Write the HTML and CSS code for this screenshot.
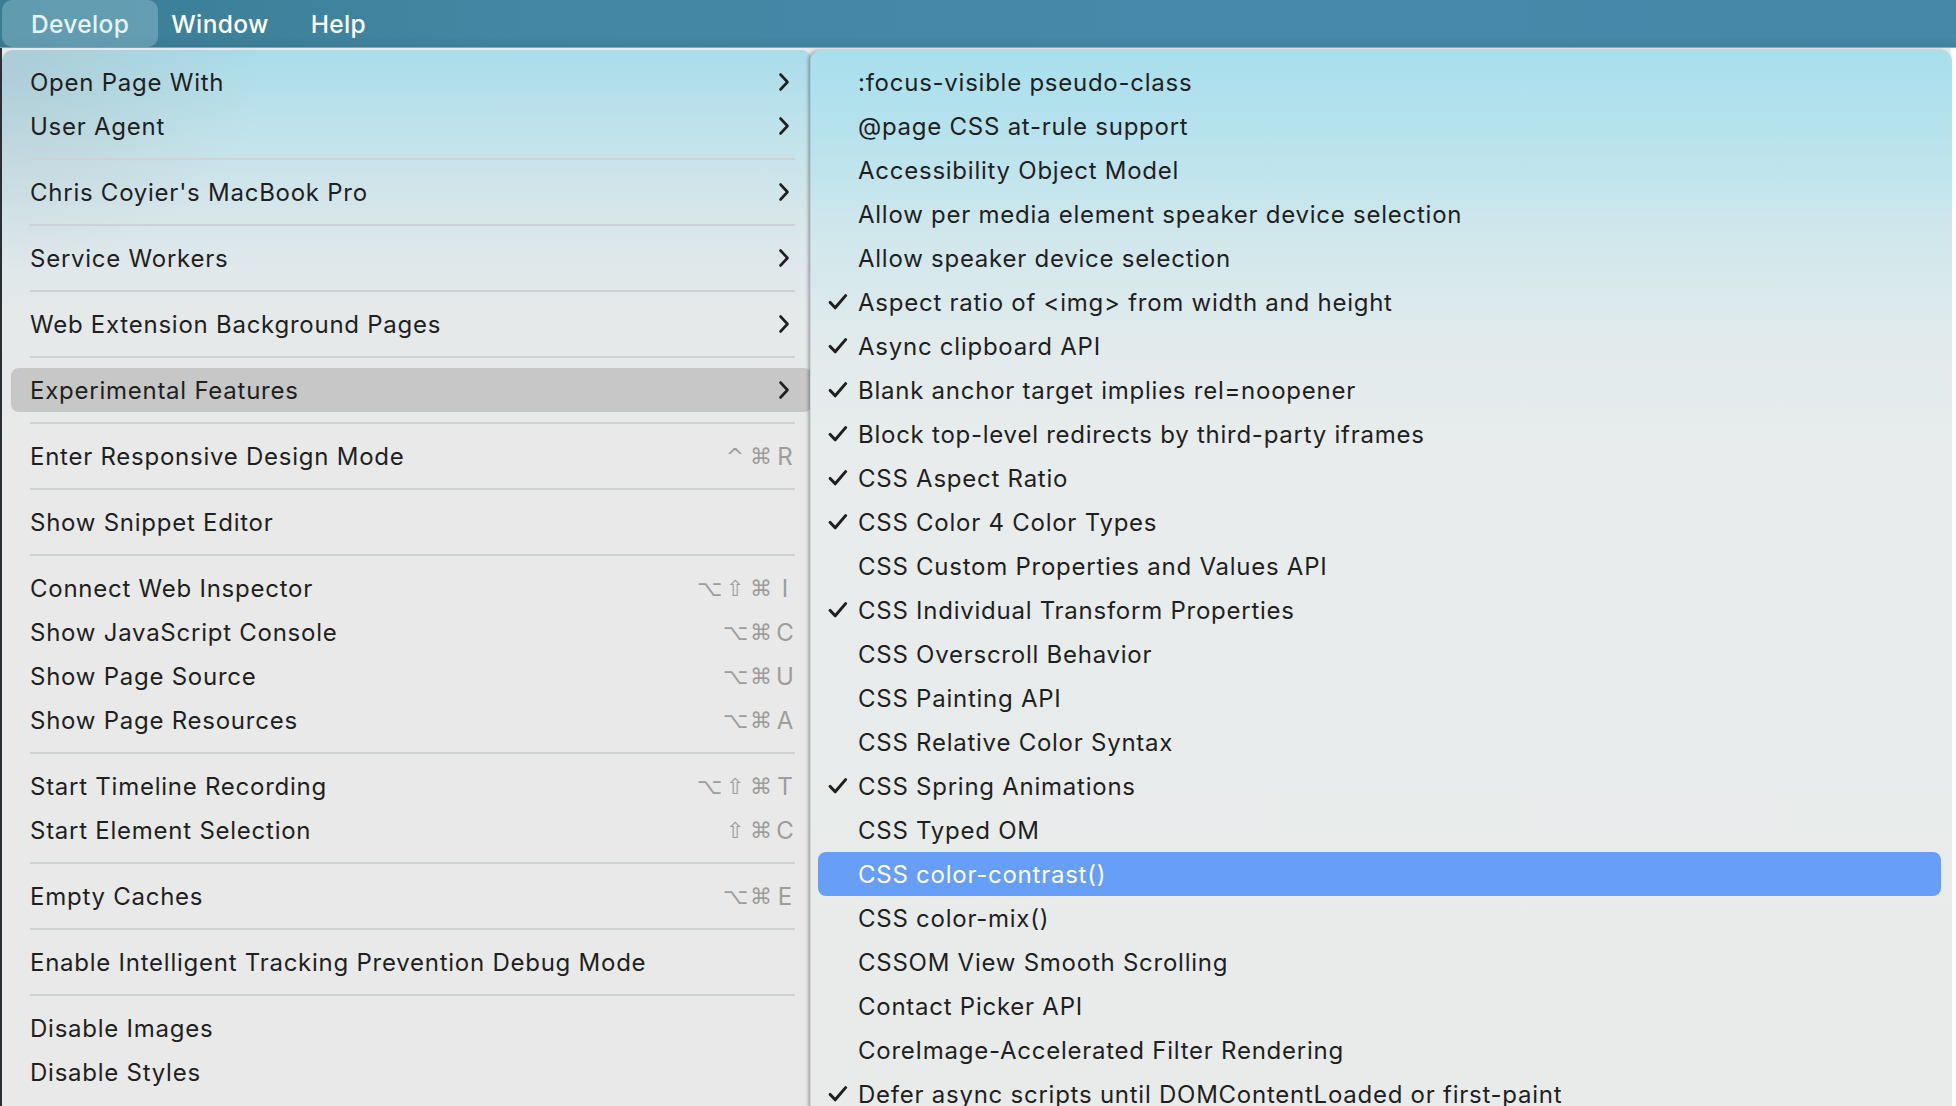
FILE: index.html
```html
<!DOCTYPE html>
<html lang="en">
<head>
<meta charset="utf-8">
<title>Develop menu</title>
<link rel="stylesheet" href="styles.css">
</head>
<body>
<div class="screen">
  <div class="menubar">
    <div class="mb-item active">Develop</div>
    <div class="mb-item">Window</div>
    <div class="mb-item">Help</div>
  </div>
  <div class="menus">
    <div class="menu parent">
      <div class="row"><span class="label">Open Page With</span><svg class="chev" viewBox="0 0 12 20"><polyline points="2.5,2.5 9.5,10 2.5,17.5"/></svg></div>
      <div class="row"><span class="label">User Agent</span><svg class="chev" viewBox="0 0 12 20"><polyline points="2.5,2.5 9.5,10 2.5,17.5"/></svg></div>
      <div class="sep"></div>
      <div class="row"><span class="label">Chris Coyier's MacBook Pro</span><svg class="chev" viewBox="0 0 12 20"><polyline points="2.5,2.5 9.5,10 2.5,17.5"/></svg></div>
      <div class="sep"></div>
      <div class="row"><span class="label">Service Workers</span><svg class="chev" viewBox="0 0 12 20"><polyline points="2.5,2.5 9.5,10 2.5,17.5"/></svg></div>
      <div class="sep"></div>
      <div class="row"><span class="label">Web Extension Background Pages</span><svg class="chev" viewBox="0 0 12 20"><polyline points="2.5,2.5 9.5,10 2.5,17.5"/></svg></div>
      <div class="sep"></div>
      <div class="row open"><span class="label">Experimental Features</span><svg class="chev" viewBox="0 0 12 20"><polyline points="2.5,2.5 9.5,10 2.5,17.5"/></svg></div>
      <div class="sep"></div>
      <div class="row"><span class="label">Enter Responsive Design Mode</span><span class="keys"><span class="k">^</span><span class="k">⌘</span><span class="key">R</span></span></div>
      <div class="sep"></div>
      <div class="row"><span class="label">Show Snippet Editor</span></div>
      <div class="sep"></div>
      <div class="row"><span class="label">Connect Web Inspector</span><span class="keys"><span class="k">⌥</span><span class="k">⇧</span><span class="k">⌘</span><span class="key">I</span></span></div>
      <div class="row"><span class="label">Show JavaScript Console</span><span class="keys"><span class="k">⌥</span><span class="k">⌘</span><span class="key">C</span></span></div>
      <div class="row"><span class="label">Show Page Source</span><span class="keys"><span class="k">⌥</span><span class="k">⌘</span><span class="key">U</span></span></div>
      <div class="row"><span class="label">Show Page Resources</span><span class="keys"><span class="k">⌥</span><span class="k">⌘</span><span class="key">A</span></span></div>
      <div class="sep"></div>
      <div class="row"><span class="label">Start Timeline Recording</span><span class="keys"><span class="k">⌥</span><span class="k">⇧</span><span class="k">⌘</span><span class="key">T</span></span></div>
      <div class="row"><span class="label">Start Element Selection</span><span class="keys"><span class="k">⇧</span><span class="k">⌘</span><span class="key">C</span></span></div>
      <div class="sep"></div>
      <div class="row"><span class="label">Empty Caches</span><span class="keys"><span class="k">⌥</span><span class="k">⌘</span><span class="key">E</span></span></div>
      <div class="sep"></div>
      <div class="row"><span class="label">Enable Intelligent Tracking Prevention Debug Mode</span></div>
      <div class="sep"></div>
      <div class="row"><span class="label">Disable Images</span></div>
      <div class="row"><span class="label">Disable Styles</span></div>
    </div>
    <div class="menu sub">
      <div class="item"><span class="check"></span><span class="label">:focus-visible pseudo-class</span></div>
      <div class="item"><span class="check"></span><span class="label">@page CSS at-rule support</span></div>
      <div class="item"><span class="check"></span><span class="label">Accessibility Object Model</span></div>
      <div class="item"><span class="check"></span><span class="label">Allow per media element speaker device selection</span></div>
      <div class="item"><span class="check"></span><span class="label">Allow speaker device selection</span></div>
      <div class="item"><svg class="check" viewBox="0 0 20 16"><path d="M2.2 8.4 L7.2 13.8 L17.6 1.6"/></svg><span class="label">Aspect ratio of &lt;img&gt; from width and height</span></div>
      <div class="item"><svg class="check" viewBox="0 0 20 16"><path d="M2.2 8.4 L7.2 13.8 L17.6 1.6"/></svg><span class="label">Async clipboard API</span></div>
      <div class="item"><svg class="check" viewBox="0 0 20 16"><path d="M2.2 8.4 L7.2 13.8 L17.6 1.6"/></svg><span class="label">Blank anchor target implies rel=noopener</span></div>
      <div class="item"><svg class="check" viewBox="0 0 20 16"><path d="M2.2 8.4 L7.2 13.8 L17.6 1.6"/></svg><span class="label">Block top-level redirects by third-party iframes</span></div>
      <div class="item"><svg class="check" viewBox="0 0 20 16"><path d="M2.2 8.4 L7.2 13.8 L17.6 1.6"/></svg><span class="label">CSS Aspect Ratio</span></div>
      <div class="item"><svg class="check" viewBox="0 0 20 16"><path d="M2.2 8.4 L7.2 13.8 L17.6 1.6"/></svg><span class="label">CSS Color 4 Color Types</span></div>
      <div class="item"><span class="check"></span><span class="label">CSS Custom Properties and Values API</span></div>
      <div class="item"><svg class="check" viewBox="0 0 20 16"><path d="M2.2 8.4 L7.2 13.8 L17.6 1.6"/></svg><span class="label">CSS Individual Transform Properties</span></div>
      <div class="item"><span class="check"></span><span class="label">CSS Overscroll Behavior</span></div>
      <div class="item"><span class="check"></span><span class="label">CSS Painting API</span></div>
      <div class="item"><span class="check"></span><span class="label">CSS Relative Color Syntax</span></div>
      <div class="item"><svg class="check" viewBox="0 0 20 16"><path d="M2.2 8.4 L7.2 13.8 L17.6 1.6"/></svg><span class="label">CSS Spring Animations</span></div>
      <div class="item"><span class="check"></span><span class="label">CSS Typed OM</span></div>
      <div class="item selected"><span class="check"></span><span class="label">CSS color-contrast()</span></div>
      <div class="item"><span class="check"></span><span class="label">CSS color-mix()</span></div>
      <div class="item"><span class="check"></span><span class="label">CSSOM View Smooth Scrolling</span></div>
      <div class="item"><span class="check"></span><span class="label">Contact Picker API</span></div>
      <div class="item"><span class="check"></span><span class="label">CoreImage-Accelerated Filter Rendering</span></div>
      <div class="item"><svg class="check" viewBox="0 0 20 16"><path d="M2.2 8.4 L7.2 13.8 L17.6 1.6"/></svg><span class="label">Defer async scripts until DOMContentLoaded or first-paint</span></div>
    </div>
  </div>
</div>
</body>
</html>
```

FILE: styles.css
```css
* { box-sizing: border-box; }

html, body {
  margin: 0;
  padding: 0;
}

body {
  width: 1956px;
  height: 1106px;
  overflow: hidden;
  background: #f4f4f4;
  font-family: Inter, "Noto Sans", "Liberation Sans", sans-serif;
  color: #1f1f1f;
}

.screen {
  width: 1956px;
  height: 1106px;
  overflow: hidden;
  background: linear-gradient(90deg, #2a2f33 0, #2a2f33 2px, #e9e9e9 2px, #e9e9e9 1950px, #ffffff 1952px);
}

/* ---------- menu bar ---------- */
.menubar {
  height: 48px;
  display: flex;
  align-items: center;
  padding-left: 10px;
  background:
    linear-gradient(180deg, rgba(255,255,255,0) 0, rgba(255,255,255,0) 36px, rgba(0,0,0,0.06) 47px, rgba(150,200,220,0.6) 47px),
    linear-gradient(90deg, #3a7d94 0, #4386a3 500px, #4689aa 1200px, #4588a8 1956px);
  color: #ffffff;
  font-size: 24.5px;
  font-weight: 500;
  letter-spacing: 0.35px;
}

.mb-item {
  position: relative;
  padding: 0 21px;
  line-height: 48px;
}

.mb-item.active::before {
  content: "";
  position: absolute;
  top: 0;
  bottom: 1px;
  left: -8px;
  right: -8px;
  border-radius: 10px;
  background: rgba(180, 220, 235, 0.33);
}

/* ---------- menus ---------- */
.menus {
  display: flex;
  padding-top: 2px;
  padding-left: 2px;
  align-items: flex-start;
}

.menu {
  border-radius: 11px 11px 0 0;
  font-size: 24px;
  letter-spacing: 0.75px;
  padding-top: 10px;
  height: 1060px;
}

.parent {
  width: 810px;
  background:
    radial-gradient(ellipse 260px 200px at 0 20px, rgba(170,175,178,0.35), rgba(170,175,178,0) 100%),
    linear-gradient(180deg, #a9dcea 0, #bde2eb 70px, #d6e6ea 160px, #e5e9ea 260px, #e9e9e9 400px, #e9e9e9 100%);
}

.sub {
  width: 1142px;
  margin-left: -2px;
  position: relative;
  background: linear-gradient(180deg, #a9dfed 0, #b6e2ed 80px, #cfe7ec 180px, #e2ebec 300px, #e9ecec 420px, #e9ebeb 100%);
  box-shadow: -2px 0 3px rgba(0,0,0,0.28), inset 1px 0 0 rgba(0,0,0,0.08);
}

.row {
  height: 44px;
  display: flex;
  align-items: center;
  padding: 0 22px 0 28px;
  white-space: nowrap;
}

.row .label {
  flex: 1;
}

.row.open {
  margin-left: 9px;
  padding-left: 19px;
  padding-right: 22px;
  background: #c7c7c7;
  border-radius: 8px;
}

.chev {
  width: 12px;
  height: 20px;
  fill: none;
  stroke: #1f1f1f;
  stroke-width: 2.6;
  stroke-linecap: round;
  stroke-linejoin: round;
}

.sep {
  height: 22px;
  display: flex;
  align-items: center;
  padding: 0 17px 0 28px;
}

.sep::after {
  content: "";
  flex: 1;
  height: 2px;
  background: #cfd2d3;
}

.keys {
  display: flex;
  align-items: center;
  gap: 2px;
  color: #9d9d9d;
  font-family: "DejaVu Sans", Inter, sans-serif;
  font-size: 22px;
  letter-spacing: 0;
  margin-right: -5px;
}

.keys .k {
  width: 24px;
  text-align: center;
  overflow: hidden;
}

.keys .key {
  width: 20px;
  text-align: center;
  font-family: Inter, "DejaVu Sans", sans-serif;
  font-size: 24px;
}

/* sub menu items */
.item {
  height: 44px;
  display: flex;
  align-items: center;
  padding-left: 18px;
  white-space: nowrap;
}

.item .check {
  width: 20px;
  height: 16px;
  margin-right: 10px;
  flex: none;
  fill: none;
  stroke: #1f1f1f;
  stroke-width: 3;
  stroke-linecap: round;
  stroke-linejoin: round;
}

.item.selected {
  margin: 0 11px 0 8px;
  padding-left: 10px;
  background: #679ef7;
  border-radius: 8px;
  color: #ffffff;
}
```
